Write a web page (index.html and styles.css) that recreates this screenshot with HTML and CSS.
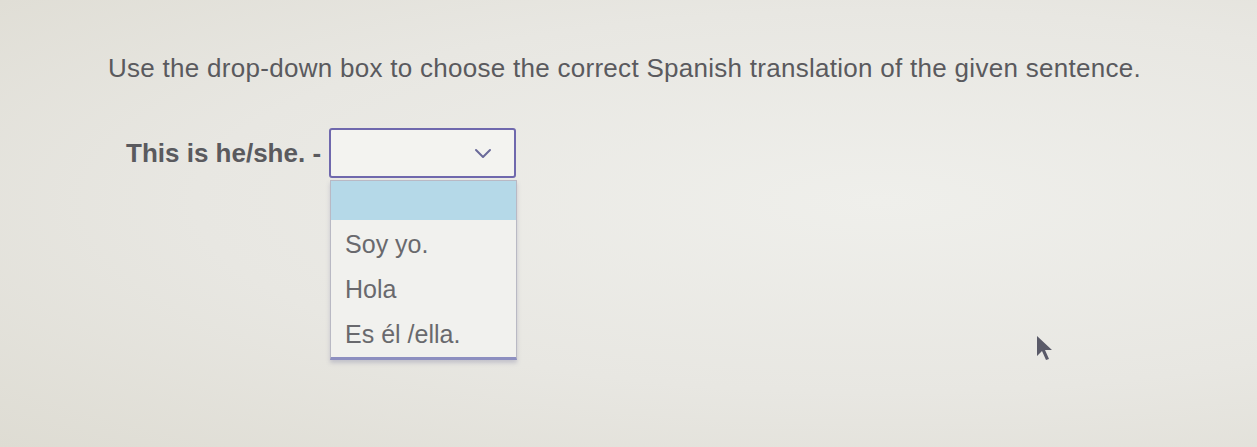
FILE: index.html
```html
<!DOCTYPE html>
<html>
<head>
<meta charset="utf-8">
<link rel="stylesheet" href="styles.css">
</head>
<body>
<div class="page">
  <p class="instructions">Use the drop-down box to choose the correct Spanish translation of the given sentence.</p>
  <div class="question">
    <span class="label">This is he/she. -</span>
    <div class="select-wrap">
      <div class="select">
        <svg class="chevron" width="18" height="11" viewBox="0 0 18 11"><path d="M2 2 L9 9 L16 2" fill="none" stroke="#6a6a9a" stroke-width="2" stroke-linecap="round" stroke-linejoin="round"/></svg>
      </div>
      <ul class="menu">
        <li class="opt highlighted"></li>
        <li class="opt">Soy yo.</li>
        <li class="opt">Hola</li>
        <li class="opt">Es él /ella.</li>
      </ul>
    </div>
  </div>
  <svg class="cursor" width="20" height="28" viewBox="0 0 20 28"><path d="M2 2 L2 22 L7 17 L11 26 L14 25 L10 16 L17 16 Z" fill="#5a5a68"/></svg>
</div>
</body>
</html>
```
FILE: styles.css
```css
html, body {
  margin: 0;
  padding: 0;
}
body {
  width: 1257px;
  height: 447px;
  overflow: hidden;
  background: radial-gradient(ellipse at 70% 45%, #efefeb 0%, #e8e7e2 55%, #dedcd3 100%);
  font-family: "Liberation Sans", Arial, sans-serif;
  color: #5c5c5e;
}
.page {
  position: relative;
  height: 447px;
  padding: 50px 0 0 108px;
  box-sizing: border-box;
}
.instructions {
  margin: 0;
  font-size: 26px;
  line-height: 36px;
  letter-spacing: 0.28px;
  color: #5a5a5e;
}
.question {
  display: flex;
  align-items: center;
  margin: 42px 0 0 18px;
}
.label {
  font-weight: bold;
  font-size: 26px;
  letter-spacing: 0;
  color: #5a5a5e;
  margin-right: 8px;
}
.select-wrap {
  position: relative;
}
.select {
  border: 2px solid #6f68ad;
  border-radius: 3px;
  background: #f3f3f0;
  display: flex;
  align-items: center;
  justify-content: flex-end;
  padding-right: 22px;
  box-sizing: border-box;
  width: 187px;
  height: 50px;
}
.menu {
  position: absolute;
  left: 1px;
  top: 52px;
  width: 187px;
  margin: 0;
  padding: 0;
  list-style: none;
  background: #f1f1ee;
  border: 1px solid #b9b9c4;
  border-bottom: 3px solid #8d8fc0;
  box-shadow: 0 3px 4px rgba(90, 90, 140, 0.25);
  box-sizing: border-box;
}
.opt {
  height: 45px;
  line-height: 45px;
  padding-left: 14px;
  font-size: 25px;
  color: #69696d;
}
.opt.highlighted {
  height: 39px;
  background: #b5d9e8;
  margin-bottom: 2px;
}
.cursor {
  position: absolute;
  left: 1035px;
  top: 334px;
}
```
